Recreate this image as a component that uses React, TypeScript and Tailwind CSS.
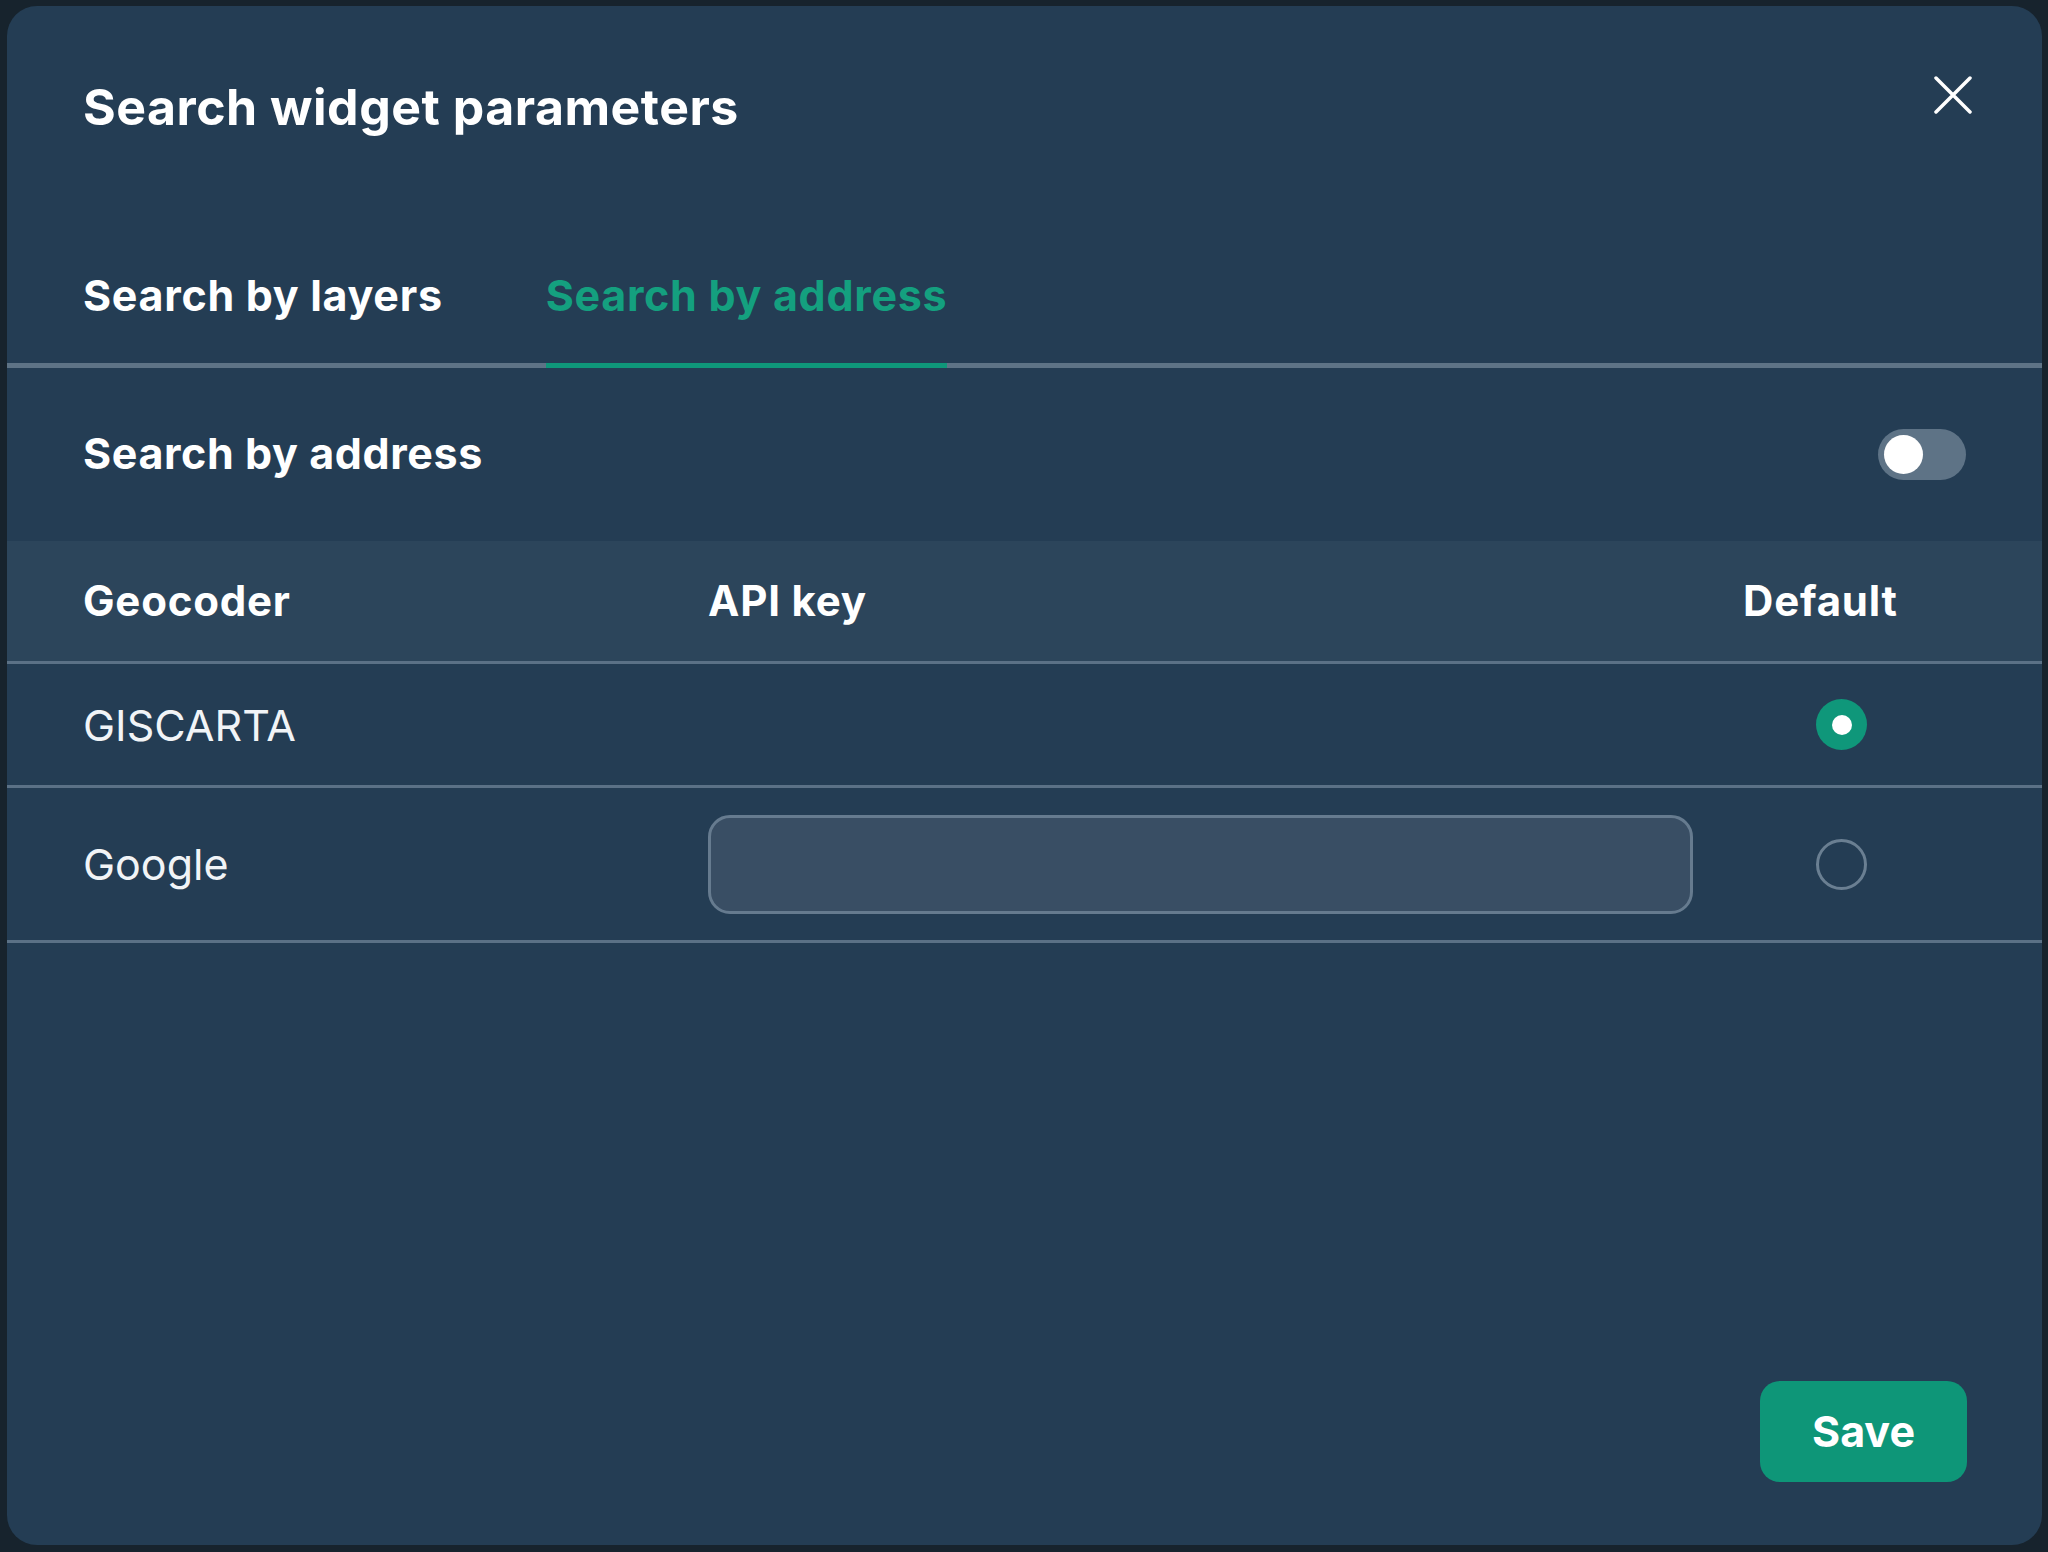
import { useState } from "react";

const FONT = { fontFamily: "Inter, 'Noto Sans', sans-serif" };

type Geocoder = { name: string; needsKey: boolean };

const GEOCODERS: Geocoder[] = [
  { name: "GISCARTA", needsKey: false },
  { name: "Google", needsKey: true },
];

function Radio({ checked }: { checked: boolean }) {
  if (checked) {
    return (
      <span className="flex h-[51px] w-[51px] items-center justify-center rounded-full bg-[#0f977a]">
        <span className="h-[20px] w-[20px] rounded-full bg-white" />
      </span>
    );
  }
  return <span className="block h-[51px] w-[51px] rounded-full border-[3px] border-[#6a7f92]" />;
}

export default function App() {
  const [tab, setTab] = useState<"layers" | "address">("address");
  const [enabled, setEnabled] = useState(false);
  const [selected, setSelected] = useState("GISCARTA");

  return (
    <div className="flex h-[1552px] w-[2048px] bg-[#17232d] pl-[7px] pt-[6px]" style={FONT}>
      <div className="flex h-[1539px] w-[2035px] flex-col rounded-[30px] bg-[#243d54] text-white">
        {/* header */}
        <div className="flex items-start justify-between pl-[76px] pr-[70px]">
          <h1 className="pt-[72px] text-[50px] font-bold leading-[58px] tracking-[0.5px]">
            Search widget parameters
          </h1>
          <button className="mt-[70px] h-[38px] w-[38px] text-white">
            <svg viewBox="0 0 38 38" className="h-[38px] w-[38px]" fill="none" stroke="currentColor" strokeWidth="3.5" strokeLinecap="round">
              <path d="M2 2L36 36M36 2L2 36" />
            </svg>
          </button>
        </div>

        {/* tabs */}
        <div className="mt-[135px] flex gap-[103px] border-b-[5px] border-[#5e7386] pl-[76px]">
          <button
            onClick={() => setTab("layers")}
            className={
              tab === "layers"
                ? "-mb-[5px] border-b-[5px] border-[#0f977a] pb-[44px] text-[43px] font-bold leading-[48px] tracking-[0.7px] text-[#14a07f]"
                : "pb-[44px] text-[43px] font-bold leading-[48px] tracking-[0.7px] text-white"
            }
          >
            Search by layers
          </button>
          <button
            onClick={() => setTab("address")}
            className={
              tab === "address"
                ? "-mb-[5px] border-b-[5px] border-[#0f977a] pb-[44px] text-[43px] font-bold leading-[48px] tracking-[0.7px] text-[#14a07f]"
                : "pb-[44px] text-[43px] font-bold leading-[48px] tracking-[0.7px] text-white"
            }
          >
            Search by address
          </button>
        </div>

        {/* enable row */}
        <div className="flex h-[173px] items-center justify-between pb-[4px] pl-[76px] pr-[76px]">
          <span className="text-[43px] font-bold leading-[48px] tracking-[0.6px]">Search by address</span>
          <button
            onClick={() => setEnabled(!enabled)}
            className={
              enabled
                ? "mt-[4px] flex h-[51px] w-[88px] items-center justify-end rounded-full bg-[#0f977a] px-[6px]"
                : "mt-[4px] flex h-[51px] w-[88px] items-center justify-start rounded-full bg-[#5e7386] px-[6px]"
            }
          >
            <span className="h-[39px] w-[39px] rounded-full bg-white" />
          </button>
        </div>

        {/* table header */}
        <div className="grid h-[123px] grid-cols-[625px_985px_1fr] items-center border-b-[3px] border-[#5b7186] bg-[#2c455b] pl-[76px] text-[42px] font-bold leading-[48px] tracking-[0.8px]">
          <span>Geocoder</span>
          <span>API key</span>
          <span className="pl-[50px]">Default</span>
        </div>

        {/* rows */}
        {GEOCODERS.map((g) => (
          <div
            key={g.name}
            className={
              g.needsKey
                ? "grid h-[155px] grid-cols-[625px_985px_1fr] items-center border-b-[3px] border-[#5b7186] pl-[76px]"
                : "grid h-[124px] grid-cols-[625px_985px_1fr] items-center border-b-[3px] border-[#5b7186] pl-[76px]"
            }
          >
            <span className="text-[43px] font-normal leading-[48px] text-[#f1f4f7]">{g.name}</span>
            <div>
              {g.needsKey && (
                <input
                  className="h-[99px] w-[985px] rounded-[22px] border-[3px] border-[#667b8f] bg-[#394e64] px-6 text-[32px] text-white outline-none"
                />
              )}
            </div>
            <button onClick={() => setSelected(g.name)} className="pl-[123px]">
              <Radio checked={selected === g.name} />
            </button>
          </div>
        ))}

        {/* footer */}
        <div className="flex flex-1 items-end justify-end pb-[63px] pr-[75px]">
          <button className="h-[101px] w-[207px] rounded-[20px] bg-[#0e9678] text-[43px] font-bold text-white">
            Save
          </button>
        </div>
      </div>
    </div>
  );
}
